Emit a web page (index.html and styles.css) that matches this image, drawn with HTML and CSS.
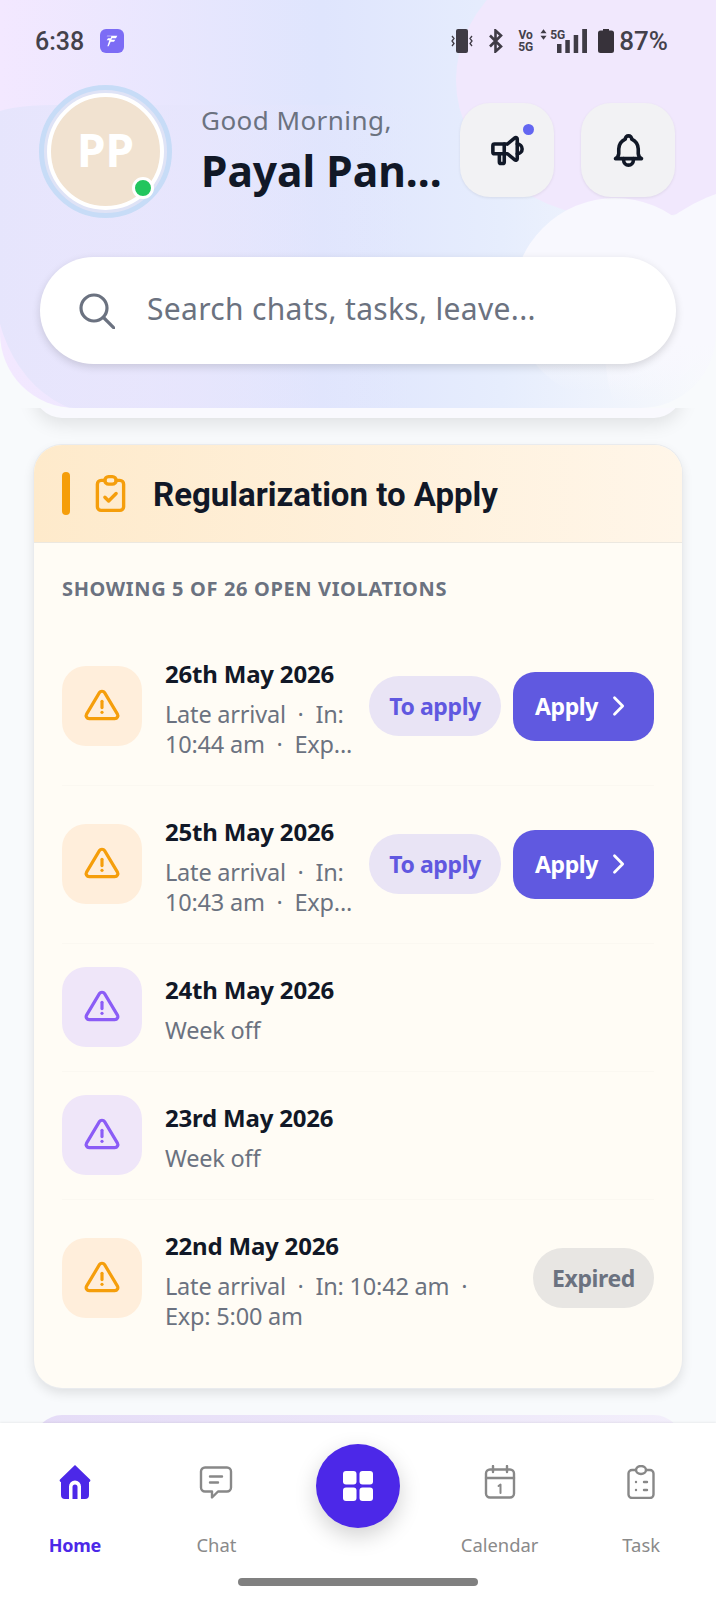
FILE: index.html
```html
<!DOCTYPE html>
<html lang="en">
<head>
  <meta charset="UTF-8">
  <title>Home</title>
  <link rel="stylesheet" href="styles.css">
</head>
<body>
<div class="phone">

  <header class="top">
    <div class="blob blob-left"></div>
    <div class="blob blob-pink"></div>
    <div class="blob blob-white"></div>
    <div class="blob blob-white2"></div>

    <div class="status">
      <span class="time">6:38</span>
      <span class="app-badge">
        <svg viewBox="0 0 24 24" width="16" height="16" fill="#fff"><path d="M5 4h15l-2 4h-6l-1 2h6l-2 3h-5l-3 7H5l3-9H4l2-3h4l1-3H4z"/></svg>
      </span>
      <span class="status-right">
        <svg class="st-icon" viewBox="0 0 26 24" width="26" height="24" fill="#3f3b45"><rect x="7" y="0" width="12" height="24" rx="2"/><path d="M3 7l2 2.500-2 2.500 2 2.500-2 2.500M23 7l-2 2.500 2 2.500-2 2.500 2 2.500" fill="none" stroke="#3f3b45" stroke-width="1.300"/></svg>
        <svg class="st-icon bt" viewBox="0 0 14 24" width="14" height="24" fill="none" stroke="#3f3b45" stroke-width="2.600"><path d="M1 6.500l11 11-5.500 5V1.500l5.500 5-11 11"/></svg>
        <span class="vo">Vo<br>5G</span>
        <span class="signal">
          <svg viewBox="0 0 8 12" width="7" height="11" fill="#3f3b45"><path d="M4 0l3.500 4.500h-7zM4 12L.5 7.500h7z"/></svg>
          <span class="five-g">5G</span>
          <svg class="bars" viewBox="0 0 30 24" width="30" height="24" fill="#3f3b45"><rect x="0" y="15" width="4.500" height="9"/><rect x="8.300" y="11" width="4.500" height="13"/><rect x="16.700" y="6" width="4.500" height="18"/><rect x="25.200" y="0" width="4.800" height="24"/></svg>
        </span>
        <svg class="st-icon batt" viewBox="0 0 16 24" width="16" height="24" fill="#37323a"><path d="M5 0h6v1.500h2.500A2.500 2.500 0 0 1 16 4v17.500a2.500 2.500 0 0 1-2.500 2.500h-11A2.500 2.500 0 0 1 0 21.500V4a2.500 2.500 0 0 1 2.500-2.500H5z"/></svg>
        <span class="pct">87%</span>
      </span>
    </div>

    <div class="hello">
      <div class="avatar">
        <div class="avatar-in">PP</div>
        <span class="online"></span>
      </div>
      <div class="who">
        <div class="greet">Good Morning,</div>
        <div class="name">Payal Pan...</div>
      </div>
      <button class="round-btn">
        <svg viewBox="0 0 24 24" width="39" height="39" fill="none" stroke="#111827" stroke-width="2.200" stroke-linecap="round" stroke-linejoin="round"><path d="M18 8a3 3 0 0 1 0 6"/><path d="M10 8v11a1 1 0 0 1-1 1H8a1 1 0 0 1-1-1v-5"/><path d="M12 8l4.524-3.770a.9.9 0 0 1 1.476.692v12.156a.9.9 0 0 1-1.476.692L12 14H4a1 1 0 0 1-1-1V9a1 1 0 0 1 1-1h8"/></svg>
        <span class="dot"></span>
      </button>
      <button class="round-btn">
        <svg viewBox="0 0 24 24" width="39" height="39" fill="none" stroke="#111827" stroke-width="2.200" stroke-linecap="round" stroke-linejoin="round"><path d="M10 5a2 2 0 1 1 4 0 7 7 0 0 1 4 6v3a4 4 0 0 0 2 3H4a4 4 0 0 0 2-3v-3a7 7 0 0 1 4-6"/><path d="M9 17v1a3 3 0 0 0 6 0v-1"/></svg>
      </button>
    </div>

    <div class="search">
      <svg viewBox="0 0 36 36" width="36" height="36" fill="none" stroke="#6b7280" stroke-width="3.200" stroke-linecap="round"><circle cx="15" cy="15" r="13"/><path d="M24.500 24.500L35 35"/></svg>
      <span class="search-text">Search chats, tasks, leave...</span>
    </div>
  </header>

  <main class="feed">
    <div class="card-tail"></div>

    <section class="card">
      <div class="card-head">
        <span class="bar"></span>
        <svg viewBox="0 0 24 24" width="45" height="45" fill="none" stroke="#f59e0b" stroke-width="1.800" stroke-linecap="round" stroke-linejoin="round"><path d="M9 5H7a2 2 0 0 0-2 2v12a2 2 0 0 0 2 2h10a2 2 0 0 0 2-2V7a2 2 0 0 0-2-2h-2"/><rect x="9" y="3" width="6" height="4" rx="2"/><path d="M9 14l2 2 4-4"/></svg>
        <h2>Regularization to Apply</h2>
      </div>
      <div class="card-body">
        <div class="count">SHOWING 5 OF 26 OPEN VIOLATIONS</div>

        <div class="row">
          <div class="tile orange">
            <svg viewBox="0 0 24 24" width="38" height="38" fill="none" stroke="currentColor" stroke-width="2" stroke-linecap="round" stroke-linejoin="round"><path d="M12 9v4"/><path d="M10.363 3.591L2.257 17.125a1.914 1.914 0 0 0 1.636 2.871h16.214a1.914 1.914 0 0 0 1.636-2.870L13.637 3.590a1.914 1.914 0 0 0-3.274 0z"/><path d="M12 16h.01"/></svg>
          </div>
          <div class="info">
            <div class="date">26th May 2026</div>
            <div class="sub">Late arrival &nbsp;·&nbsp; In: 10:44 am &nbsp;·&nbsp; Exp...</div>
          </div>
          <span class="pill">To apply</span>
          <button class="apply">Apply
            <svg viewBox="0 0 24 24" width="28" height="28" fill="none" stroke="#fff" stroke-width="2.400" stroke-linecap="round" stroke-linejoin="round"><path d="M9 5l7 7-7 7"/></svg>
          </button>
        </div>

        <div class="row">
          <div class="tile orange">
            <svg viewBox="0 0 24 24" width="38" height="38" fill="none" stroke="currentColor" stroke-width="2" stroke-linecap="round" stroke-linejoin="round"><path d="M12 9v4"/><path d="M10.363 3.591L2.257 17.125a1.914 1.914 0 0 0 1.636 2.871h16.214a1.914 1.914 0 0 0 1.636-2.870L13.637 3.590a1.914 1.914 0 0 0-3.274 0z"/><path d="M12 16h.01"/></svg>
          </div>
          <div class="info">
            <div class="date">25th May 2026</div>
            <div class="sub">Late arrival &nbsp;·&nbsp; In: 10:43 am &nbsp;·&nbsp; Exp...</div>
          </div>
          <span class="pill">To apply</span>
          <button class="apply">Apply
            <svg viewBox="0 0 24 24" width="28" height="28" fill="none" stroke="#fff" stroke-width="2.400" stroke-linecap="round" stroke-linejoin="round"><path d="M9 5l7 7-7 7"/></svg>
          </button>
        </div>

        <div class="row">
          <div class="tile purple">
            <svg viewBox="0 0 24 24" width="38" height="38" fill="none" stroke="currentColor" stroke-width="2" stroke-linecap="round" stroke-linejoin="round"><path d="M12 9v4"/><path d="M10.363 3.591L2.257 17.125a1.914 1.914 0 0 0 1.636 2.871h16.214a1.914 1.914 0 0 0 1.636-2.870L13.637 3.590a1.914 1.914 0 0 0-3.274 0z"/><path d="M12 16h.01"/></svg>
          </div>
          <div class="info">
            <div class="date">24th May 2026</div>
            <div class="sub">Week off</div>
          </div>
        </div>

        <div class="row">
          <div class="tile purple">
            <svg viewBox="0 0 24 24" width="38" height="38" fill="none" stroke="currentColor" stroke-width="2" stroke-linecap="round" stroke-linejoin="round"><path d="M12 9v4"/><path d="M10.363 3.591L2.257 17.125a1.914 1.914 0 0 0 1.636 2.871h16.214a1.914 1.914 0 0 0 1.636-2.870L13.637 3.590a1.914 1.914 0 0 0-3.274 0z"/><path d="M12 16h.01"/></svg>
          </div>
          <div class="info">
            <div class="date">23rd May 2026</div>
            <div class="sub">Week off</div>
          </div>
        </div>

        <div class="row last">
          <div class="tile orange">
            <svg viewBox="0 0 24 24" width="38" height="38" fill="none" stroke="currentColor" stroke-width="2" stroke-linecap="round" stroke-linejoin="round"><path d="M12 9v4"/><path d="M10.363 3.591L2.257 17.125a1.914 1.914 0 0 0 1.636 2.871h16.214a1.914 1.914 0 0 0 1.636-2.870L13.637 3.590a1.914 1.914 0 0 0-3.274 0z"/><path d="M12 16h.01"/></svg>
          </div>
          <div class="info">
            <div class="date">22nd May 2026</div>
            <div class="sub">Late arrival &nbsp;·&nbsp; In: 10:42 am &nbsp;·&nbsp; Exp: 5:00 am</div>
          </div>
          <span class="pill expired">Expired</span>
        </div>
      </div>
    </section>

    <div class="next-card"></div>
  </main>

  <nav class="tabs">
    <div class="tab active">
      <svg viewBox="0 0 34 34" width="34" height="34"><path fill="#4c28e8" fill-rule="evenodd" d="M17 0l15 14.500a1.500 1.500 0 0 1-1 2.500v13a4 4 0 0 1-4 4H7a4 4 0 0 1-4-4V17a1.500 1.500 0 0 1-1-2.500zM11 34h3.500V22a2.500 2.500 0 0 1 5 0v12H23V21.500a6 6 0 0 0-12 0z"/></svg>
      <span>Home</span>
    </div>
    <div class="tab">
      <svg viewBox="0 0 34 34" width="34" height="34" fill="none" stroke="#888" stroke-width="2.400" stroke-linecap="round" stroke-linejoin="round"><path d="M6 2.500h22a4 4 0 0 1 4 4v16a4 4 0 0 1-4 4h-9l-6 6v-6H6a4 4 0 0 1-4-4v-16a4 4 0 0 1 4-4z"/><path d="M11 11.500h12M11 17.500h8"/></svg>
      <span>Chat</span>
    </div>
    <div class="tab fab-col">
      <button class="fab">
        <svg viewBox="0 0 30 30" width="30" height="30" fill="#fff"><rect width="13.500" height="13.500" rx="3"/><rect x="16.500" width="13.500" height="13.500" rx="3"/><rect y="16.500" width="13.500" height="13.500" rx="3"/><rect x="16.500" y="16.500" width="13.500" height="13.500" rx="3"/></svg>
      </button>
    </div>
    <div class="tab">
      <svg viewBox="0 0 34 34" width="34" height="34" fill="none" stroke="#888" stroke-width="2.400" stroke-linecap="round" stroke-linejoin="round"><rect x="3" y="4.500" width="28" height="28" rx="4"/><path d="M3 13h28M10 1v6M24 1v6"/><path d="M15.500 21l2-1.500V28" stroke-width="2"/></svg>
      <span>Calendar</span>
    </div>
    <div class="tab">
      <svg viewBox="0 0 34 34" width="34" height="34" fill="none" stroke="#888" stroke-width="2.400" stroke-linecap="round" stroke-linejoin="round"><path d="M12 5H8a3.500 3.500 0 0 0-3.500 3.500v21A3.500 3.500 0 0 0 8 33h18a3.500 3.500 0 0 0 3.500-3.500v-21A3.500 3.500 0 0 0 26 5h-4"/><ellipse cx="17" cy="5" rx="5" ry="4"/><path d="M12 17h.01M20 17h3M12 25h.01M20 25h3"/></svg>
      <span>Task</span>
    </div>
    <div class="home-bar"></div>
  </nav>

</div>
</body>
</html>
```

FILE: styles.css
```css
* {
  box-sizing: border-box;
}

body {
  margin: 0;
  font-family: "Noto Sans", sans-serif;
  background: #f8fafc;
  color: #111827;
}

button {
  border: none;
  padding: 0;
  font-family: inherit;
}

.phone {
  width: 716px;
  height: 1600px;
  display: flex;
  flex-direction: column;
  overflow: hidden;
}

/* header */

.top {
  position: relative;
  z-index: 2;
  height: 408px;
  flex: none;
  overflow: hidden;
  border-radius: 0 0 75px 75px;
  background: linear-gradient(90deg, #f3e8ff 0%, #dfe5fd 45%, #e6edfd 70%, #f8fafc 100%);
}

.blob {
  position: absolute;
  border-radius: 50%;
}

.blob-left {
  left: -5px;
  top: 105px;
  width: 420px;
  height: 310px;
  border-radius: 60px 0 0 110px / 10px 0 0 130px;
  background: linear-gradient(90deg, #e6e5fc 0%, rgba(224, 229, 253, 0) 100%);
}

.blob-pink {
  left: 456px;
  top: -60px;
  width: 344px;
  height: 280px;
  background: #f1e8fd;
}

.blob-white {
  left: 513px;
  top: 198px;
  width: 204px;
  height: 204px;
  background: linear-gradient(180deg, #f8f8fe 60%, rgba(248, 248, 254, 0) 95%);
}

.blob-white2 {
  left: 605px;
  top: 185px;
  width: 330px;
  height: 330px;
  background: linear-gradient(180deg, #f8f8fe 48%, rgba(248, 248, 254, 0) 66%);
}

.status {
  position: relative;
  display: flex;
  align-items: center;
  height: 24px;
  margin-top: 29px;
  padding: 0 48px 0 35px;
  color: #44414b;
}

.time {
  font-family: Roboto, sans-serif;
  font-size: 25px;
  font-weight: 500;
}

.app-badge {
  display: flex;
  align-items: center;
  justify-content: center;
  width: 24px;
  height: 24px;
  margin-left: 16px;
  border-radius: 6px;
  background: #7c6cf5;
}

.status-right {
  display: flex;
  align-items: center;
  gap: 7px;
  margin-left: auto;
}

.bt {
  margin-left: 7px;
}

.vo {
  font-family: Roboto, sans-serif;
  font-size: 12px;
  font-weight: 700;
  line-height: 12px;
  text-align: center;
  margin-left: 8px;
}

.signal {
  position: relative;
  display: flex;
  align-items: flex-start;
  height: 24px;
  gap: 3px;
}

.five-g {
  font-family: Roboto, sans-serif;
  font-size: 12px;
  font-weight: 700;
  line-height: 12px;
}

.bars {
  margin-left: -11px;
}

.batt {
  margin-left: 4px;
}

.pct {
  font-family: Roboto, sans-serif;
  font-size: 26px;
  font-weight: 500;
  margin-left: -2px;
}

.hello {
  position: relative;
  display: flex;
  align-items: center;
  margin: 32px 41px 0 39px;
  height: 133px;
}

.avatar {
  position: relative;
  flex: none;
  width: 133px;
  height: 133px;
  padding: 3px;
  border-radius: 50%;
  background: #dfe3f6;
  border: 5px solid #c7dcf7;
}

.avatar-in {
  display: flex;
  align-items: center;
  justify-content: center;
  width: 100%;
  height: 100%;
  border: 4px solid #fff;
  border-radius: 50%;
  background: #f1e2d0;
  color: #fff;
  font-size: 46px;
  font-weight: 700;
  padding-bottom: 6px;
}

.online {
  position: absolute;
  right: 13px;
  bottom: 14px;
  width: 22px;
  height: 22px;
  border: 3.500px solid #fff;
  border-radius: 50%;
  background: #22c55e;
}

.who {
  width: 241px;
  flex: none;
  margin: -3px 18px 0 29px;
}

.greet {
  font-size: 26px;
  line-height: 36px;
  letter-spacing: 0.45px;
  color: #6b7280;
}

.name {
  margin-top: 5px;
  font-size: 42.500px;
  font-weight: 700;
  line-height: 56px;
  white-space: nowrap;
}

.round-btn {
  position: relative;
  display: flex;
  align-items: center;
  justify-content: center;
  flex: none;
  width: 94px;
  height: 94px;
  margin: 0 27px 3px 0;
  border-radius: 30px;
  background: #f2f2f4;
  box-shadow: 0 1px 3px rgba(0, 0, 0, 0.08);
}

.round-btn:last-child {
  margin-right: 0;
}

.dot {
  position: absolute;
  left: 63px;
  top: 21px;
  width: 11px;
  height: 11px;
  border-radius: 50%;
  background: #6366f1;
}

.search {
  position: relative;
  display: flex;
  align-items: center;
  gap: 32px;
  height: 107px;
  margin: 39px 40px 0;
  padding-left: 39px;
  border-radius: 54px;
  background: #fff;
  box-shadow: 0 3px 8px rgba(0, 0, 0, 0.14);
  font-size: 30px;
  letter-spacing: 0.32px;
  color: #6b7280;
}

.search-text {
  margin-bottom: 4px;
}

/* scrolling part */

.feed {
  flex: 1;
  min-height: 0;
  overflow: hidden;
  padding: 0 34px;
}

.card-tail {
  height: 40px;
  margin-top: -30px;
  border-radius: 0 0 28px 28px;
  background: #f9f9fe;
  box-shadow: 0 6px 18px rgba(0, 0, 0, 0.1);
}

.card {
  margin-top: 27px;
  border-radius: 28px;
  overflow: hidden;
  background: #fffcf5;
  box-shadow: 0 0 0 1px #e9ebee, 0 5px 12px rgba(0, 0, 0, 0.11);
}

.card-head {
  display: flex;
  align-items: center;
  height: 98px;
  padding-left: 28px;
  border-bottom: 1px solid #ece8e0;
  background: linear-gradient(90deg, #feeacb 0%, #fff6e9 100%);
}

.bar {
  width: 8px;
  height: 43px;
  border-radius: 4px;
  background: #f59e0b;
}

.card-head svg {
  margin-left: 18px;
}

.card-head h2 {
  margin: 0 0 0 20px;
  padding-top: 2px;
  font-family: Roboto, sans-serif;
  font-size: 33px;
  font-weight: 700;
}

.card-body {
  padding: 0 28px 31px;
}

.count {
  margin: 31px 0 47px;
  font-size: 20px;
  line-height: 30px;
  font-weight: 700;
  letter-spacing: 0.64px;
  color: #6b7280;
}

.row {
  display: flex;
  align-items: center;
  margin-top: 23px;
  padding-bottom: 24px;
  border-bottom: 1px solid #fbf8f1;
}

.row.last {
  border-bottom: none;
}

.tile {
  display: flex;
  align-items: center;
  justify-content: center;
  flex: none;
  width: 80px;
  height: 80px;
  border-radius: 24px;
}

.tile.orange {
  background: #ffeedb;
  color: #f59e0b;
}

.tile.purple {
  background: #efe6f9;
  color: #8b5cf6;
}

.info {
  flex: 1;
  min-width: 0;
  padding: 2.500px 12px 2.500px 23px;
}

.date {
  font-size: 24px;
  font-weight: 700;
  line-height: 40px;
  letter-spacing: -0.2px;
}

.sub {
  margin-top: 5px;
  font-size: 23.500px;
  line-height: 30px;
  letter-spacing: -0.2px;
  color: #6b7280;
}

.pill {
  flex: none;
  display: flex;
  align-items: center;
  justify-content: center;
  width: 132px;
  height: 60px;
  border-radius: 30px;
  background: #e9e4f5;
  color: #6058e0;
  font-size: 23px;
  font-weight: 700;
  letter-spacing: -0.4px;
}

.pill.expired {
  width: 121px;
  background: #e8e6e3;
  color: #6b7280;
}

.apply {
  flex: none;
  display: flex;
  align-items: center;
  justify-content: center;
  gap: 6px;
  width: 141px;
  height: 69px;
  margin-left: 12px;
  border-radius: 22px;
  background: #6059e0;
  color: #fff;
  font-size: 23px;
  font-weight: 700;
  letter-spacing: -0.4px;
}

.next-card {
  height: 40px;
  margin-top: 27px;
  border-radius: 28px 28px 0 0;
  background: linear-gradient(90deg, #e5dcf7 0%, #f3effb 100%);
}

/* bottom bar */

.tabs {
  position: relative;
  flex: none;
  display: grid;
  grid-template-columns: repeat(5, 1fr);
  height: 177px;
  padding: 42px 4px 0;
  background: #fff;
  box-shadow: 0 -1px 2px rgba(0, 0, 0, 0.06);
}

.tab {
  display: flex;
  flex-direction: column;
  align-items: center;
  gap: 33px;
  font-size: 18.400px;
  line-height: 26px;
  color: #8a8a8a;
}

.tab.active {
  color: #4c28e8;
  font-size: 18px;
  font-weight: 700;
  letter-spacing: -0.3px;
}

.fab-col {
  margin-top: -21px;
}

.fab {
  display: flex;
  align-items: center;
  justify-content: center;
  width: 84px;
  height: 84px;
  border-radius: 50%;
  background: #4c28e8;
  box-shadow: 0 8px 22px rgba(0, 0, 0, 0.18);
}

.home-bar {
  position: absolute;
  left: 238px;
  bottom: 14px;
  width: 240px;
  height: 8px;
  border-radius: 4px;
  background: #808080;
}
```
